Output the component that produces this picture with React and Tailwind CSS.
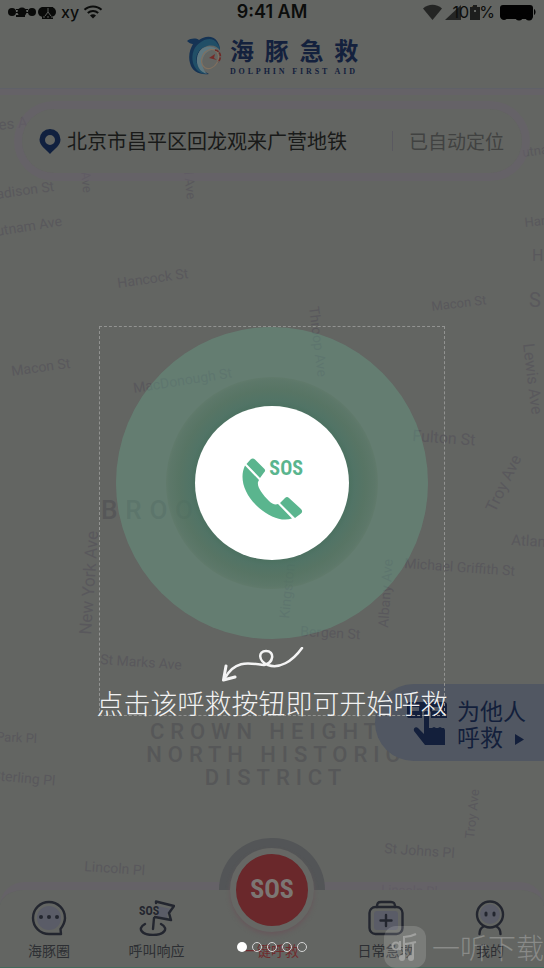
const STREETS = [
  { name: "es A", x: -1, y: 130, r: -6, s: 15 },
  { name: "adison St", x: -3, y: 199, r: -8, s: 14 },
  { name: "utnam Ave", x: -3, y: 236, r: -9, s: 14 },
  { name: "Hancock St", x: 118, y: 288, r: -8, s: 14 },
  { name: "Ave", x: 81, y: 172, r: 84, s: 13 },
  { name: "l Ave", x: 184, y: 172, r: 84, s: 13 },
  { name: "utnam", x: 523, y: 157, r: -8, s: 13 },
  { name: "Han", x: 525, y: 227, r: -6, s: 13 },
  { name: "H", x: 532, y: 261, r: 0, s: 16 },
  { name: "S", x: 529, y: 307, r: 0, s: 20 },
  { name: "Macon St", x: 432, y: 311, r: -7, s: 13 },
  { name: "Macon St", x: 12, y: 376, r: -8, s: 14 },
  { name: "MacDonough St", x: 134, y: 393, r: -9, s: 14 },
  { name: "Throop Ave", x: 309, y: 307, r: 83, s: 14 },
  { name: "Lewis Ave", x: 523, y: 344, r: 83, s: 16 },
  { name: "Fulton St", x: 412, y: 441, r: 4, s: 16 },
  { name: "Troy Ave", x: 495, y: 513, r: -64, s: 16 },
  { name: "Atlantic", x: 511, y: 545, r: 3, s: 15 },
  { name: "Michael Griffith St", x: 404, y: 568, r: 4, s: 14 },
  { name: "Albany Ave", x: 388, y: 628, r: -86, s: 14 },
  { name: "Kingston", x: 289, y: 619, r: -84, s: 14 },
  { name: "Bergen St", x: 300, y: 636, r: 3, s: 14 },
  { name: "New York Ave", x: 91, y: 635, r: -86, s: 17 },
  { name: "St Marks Ave", x: 100, y: 664, r: 4, s: 14 },
  { name: "Park Pl", x: -4, y: 741, r: 3, s: 13 },
  { name: "Sterling Pl", x: -8, y: 780, r: 5, s: 14 },
  { name: "Lincoln Pl", x: 84, y: 871, r: 4, s: 14 },
  { name: "St Johns Pl", x: 384, y: 853, r: 4, s: 14 },
  { name: "Troy Ave", x: 474, y: 839, r: -84, s: 13 },
  { name: "Lincoln Pl", x: 381, y: 894, r: 2, s: 13 },
];

const STEPS = [1, 2, 3, 4, 5];

const CONDENSED =
  "font-['Noto_Sans_ExtraCondensed','Roboto_Condensed','Open_Sans_Condensed','Liberation_Sans_Narrow',sans-serif]";

function MapBackdrop() {
  return (
    <svg
      className="absolute inset-0 h-full w-full font-[Roboto,sans-serif]"
      viewBox="0 0 544 968"
      preserveAspectRatio="xMidYMid slice"
      aria-hidden="true"
    >
      <g fill="#59585c">
        {STREETS.map((st, i) => (
          <text
            key={i}
            fontSize={st.s}
            transform={`translate(${st.x} ${st.y}) rotate(${st.r})`}
          >
            {st.name}
          </text>
        ))}
      </g>
      <g fill="#565758" className="font-medium">
        <text x="101" y="519" fontSize="26" className="tracking-[0.3em]">
          BROO
        </text>
        <g fontSize="22" textAnchor="middle" className="tracking-[0.27em]">
          <text x="276" y="739">CROWN HEIGHTS</text>
          <text x="276" y="762">NORTH HISTORIC</text>
          <text x="276" y="785">DISTRICT</text>
        </g>
      </g>
    </svg>
  );
}

function StatusBar() {
  return (
    <div className="grid h-6 grid-cols-3 items-center px-2 text-[#0c0d0c]">
      <div className="flex items-center gap-1">
        <svg width="49" height="14" viewBox="0 0 49 14">
          <g fill="#090a09">
            <circle cx="4" cy="7" r="4" />
            <circle cx="14" cy="7" r="4.5" />
            <circle cx="24" cy="7" r="4" />
            <circle cx="35" cy="7" r="5" />
            <circle cx="43" cy="7" r="5" />
            <path d="M8 4h12v1H8zM8 7h12v1H8zM8 10h9v2H8zM34 2h11v12H34z" />
          </g>
          <path
            d="M40 3v4l-3 4M40 7l3 4M35 12h2M39 12h2M43 12h2"
            stroke="#5d5f5c"
            strokeWidth="1"
            fill="none"
          />
        </svg>
        <span className="text-base leading-5 font-medium font-[Inter,sans-serif]">xy</span>
        <svg width="20" height="14" viewBox="0 0 20 14" fill="none" stroke="#0c0d0c">
          <path d="M1.5 4.8C6.2.3 13.800.3 18.500 4.800" strokeWidth="2" />
          <path d="M4.800 8C7.800 5.200 12.200 5.200 15.200 8" strokeWidth="2" />
          <path d="M7 10.500c1.800-1.600 4.200-1.600 6 0L10 13.500z" fill="#0c0d0c" stroke="none" />
        </svg>
      </div>
      <span className="text-center text-lg leading-5 font-semibold font-[Inter,sans-serif]">
        9:41 AM
      </span>
      <div className="flex items-center justify-end">
        <svg width="38" height="16" viewBox="0 0 38 16" fill="#242524">
          <path d="M0 4.500C5.500-.5 13.500-.5 19 4.500L9.500 16z" />
          <path d="M38 1v15H22z" />
        </svg>
        <span className="relative -ml-2 text-base leading-5 font-[Inter,sans-serif]">
          100%
          <svg
            className="absolute top-0.5 left-4"
            width="12"
            height="16"
            viewBox="0 0 12 16"
            fill="#1d1e1d"
          >
            <path d="M1 3h3V1h4v2h3v13H1zM5 6v2h2V6z" fillRule="evenodd" />
          </svg>
        </span>
        <svg className="ml-1" width="37" height="17" viewBox="0 0 37 17" fill="#020202">
          <rect x="1" y="1" width="33" height="14" rx="3" />
          <path d="M35 5c2 1 2 5 0 6z" />
          <circle cx="5" cy="13" r="3" />
          <circle cx="20" cy="13" r="3.500" />
          <circle cx="30" cy="13" r="3.500" />
        </svg>
      </div>
    </div>
  );
}

function DolphinLogo() {
  return (
    <svg width="35" height="40" viewBox="0 0 35 40" aria-hidden="true">
      <path
        d="M0 5c4-3 9-3 12-1 5-4 14-5 18 1 2 3 3 6 3 9-3-5-9-7-15-4C11 14 9 22 13 30c2 4 5 6 9 8-9 1-17-2-19-11C1 20 3 13 6 8 4 8 2 7 0 5z"
        fill="#153354"
      />
      <path
        d="M14 6c5-4 13-4 16 1 2 3 3 5 3 7-3-4-9-6-15-3-8 3-11 11-7 19 2 4 5 6 9 8-8 0-12-5-14-11C4 18 7 10 14 6z"
        fill="#214f67"
      />
      <path
        d="M30 13c-8-6-19-1-20 9-1 8 3 14 10 16-4-4-6-11-4-16 2-6 8-9 14-9z"
        fill="#5f7880"
      />
      <ellipse
        cx="23"
        cy="23"
        rx="8"
        ry="10"
        transform="rotate(30 23 23)"
        fill="none"
        stroke="#80705f"
        strokeWidth="1.200"
      />
      <path
        d="M28 14c6 1 7 8 3 12"
        fill="none"
        stroke="#6e2927"
        strokeWidth="1.600"
        strokeDasharray="4 1"
      />
      <path d="M22 22l6-4-1 4 3 2z" fill="#742b29" />
    </svg>
  );
}

function Header() {
  return (
    <header className="flex h-[65px] items-center justify-center gap-2 border-b border-[#5f6168]">
      <DolphinLogo />
      <div className="flex flex-col pt-1 text-[#14213d]">
        <h1 className="-mr-3 text-2xl leading-7 font-bold tracking-[0.45em]">海豚急救</h1>
        <span className="-mr-3 text-[8px] leading-4 font-bold tracking-[0.36em] font-['Liberation_Serif',serif]">
          DOLPHIN FIRST AID
        </span>
      </div>
    </header>
  );
}

function LocationBar() {
  return (
    <div className="mx-3.5 mt-1.5 flex h-20 items-center rounded-full border-8 border-[#67606b]/50 bg-[#636562] bg-clip-padding pr-[18px] pl-4">
      <svg className="shrink-0" width="24" height="27" viewBox="0 0 24 27" aria-hidden="true">
        <path
          d="M12 1a10.500 10.500 0 0 0-10.500 10.500c0 6 5.500 9 10.500 14.500 5-5.500 10.500-8.500 10.500-14.500A10.500 10.500 0 0 0 12 1zm0 6a5 5 0 1 1 0 10 5 5 0 0 1 0-10z"
          fill="#10203f"
          fillRule="evenodd"
        />
      </svg>
      <span className="ml-[5px] truncate text-xl text-[#191a19]">
        北京市昌平区回龙观来广营地铁
      </span>
      <span className="ml-auto shrink-0 border-l border-[#5a5960] pl-4 text-[19px] leading-5 text-[#414241]">
        已自动定位
      </span>
    </div>
  );
}

function CallGuide() {
  return (
    <section className="relative z-10 mx-auto mt-[145px] flex w-[346px] flex-col items-center border border-dashed border-[#929391]">
      <div className="flex size-[312px] items-center justify-center rounded-full bg-[#66a38a]/40">
        <div className="flex size-[212px] items-center justify-center rounded-full bg-[radial-gradient(closest-side,#406b58bb_70%,#486f60aa_78%,#4f6f5c99_88%,#5572617f_97%,#5d77667f_100%)]">
          <button
            type="button"
            aria-label="SOS"
            className="flex size-[154px] items-center justify-center rounded-full bg-white text-[#5ab58e]"
          >
            <span className="relative block h-[62px] w-[62px]">
              <svg width="62" height="68" viewBox="0 -6 62 68" fill="currentColor">
                <path d="M4 7.500C-2 20 3 36 17 49c11 10 24 15 34 11.500L37 46c-3 1-6 0-9-3C21 36 16 29 17 24l1-2z" />
                <path d="M5.500 6l4-4.500c1.500-1.500 3-1.500 4.500 0L23 10.500c1.500 1.500 1.500 2.500 0 4l-4 5.500z" />
                <path d="M39 45l5-5c1.500-1.500 2.500-1.500 4 0l12 11c1.500 1.500 1.500 3 0 4.500L54 60z" />
              </svg>
              <span
                className={`absolute top-1.5 right-0 text-xl leading-5 font-bold ${CONDENSED}`}
              >
                SOS
              </span>
            </span>
          </button>
        </div>
      </div>
      <svg
        className="mt-2"
        width="100"
        height="36"
        viewBox="0 0 100 36"
        fill="none"
        stroke="#f4f4f4"
        strokeLinecap="round"
        strokeLinejoin="round"
        aria-hidden="true"
      >
        <path
          d="M80 1C70 15 57 22 46 18C36 14 36 4 44 4c9 0 8 12-2 14C30 17 14 11 3 31"
          strokeWidth="2.500"
        />
        <path d="M4 19L1.500 33L13 30" strokeWidth="3" />
      </svg>
      <p className="h-8 text-[27px] leading-10 font-light whitespace-nowrap text-[#f2f2f2]">
        点击该呼救按钮即可开始呼救
      </p>
    </section>
  );
}

function HelpOthers() {
  return (
    <button
      type="button"
      className="relative -mt-8 flex h-[77px] items-center gap-2.5 self-end rounded-l-full bg-[#515762] pr-[18px] pl-8 text-left text-[#131f3b]"
    >
      <svg width="40" height="46" viewBox="0 0 40 46" fill="currentColor" aria-hidden="true">
        <path
          d="M3 2h34a3 3 0 0 1 3 3v13H24v-6a5 5 0 0 0-9 0v6H2a2 2 0 0 1-2-2V5a3 3 0 0 1 3-3zm2 5v4h7V7zm20 0v4h9V7z"
          fillRule="evenodd"
        />
        <path d="M17 13c0-3 5-3 5 0v15h3l2-1 2 1h2l2-1 2 1h2l1 2v15H18L7 31c-1-3 2-5 4-3l6 6z" />
      </svg>
      <span className="text-[23px] leading-[26px]">
        为他人
        <br />
        呼救
        <svg className="ml-3 inline" width="9" height="11" viewBox="0 0 9 11" fill="currentColor">
          <path d="M0 0l9 5.500L0 11z" />
        </svg>
      </span>
    </button>
  );
}

const ICON_PROPS = {
  width: 36,
  height: 36,
  viewBox: "0 0 36 36",
  fill: "none",
  stroke: "#23262f",
  strokeWidth: 2.4,
  strokeLinecap: "round",
  strokeLinejoin: "round",
  "aria-hidden": true,
};

function ChatIcon() {
  return (
    <svg {...ICON_PROPS}>
      <circle cx="18" cy="18" r="12" fill="#5a5c67" stroke="none" />
      <path d="M30 34H18A16 16 0 1 1 34 18c0 4-1.500 7-4.500 11z" />
      <g fill="#23262f" stroke="none">
        <circle cx="10" cy="17" r="2" />
        <circle cx="18" cy="17" r="2" />
        <circle cx="26" cy="17" r="2" />
      </g>
    </svg>
  );
}

function FlagIcon() {
  return (
    <svg {...ICON_PROPS}>
      <path d="M19 6l13 3-4 6 1 4-11-2z" fill="#5a5c67" stroke="none" />
      <path d="M17 3V1.500L35 6l-5 7 2 7-16-3M15 18l-1 11" />
      <path d="M6 24c-9 5-2 11 8 11s17-6 8-11" />
      <text
        x="0"
        y="15"
        fontSize="12"
        fill="#23262f"
        stroke="none"
        className={`font-bold ${CONDENSED}`}
      >
        SOS
      </text>
    </svg>
  );
}

function KitIcon() {
  return (
    <svg {...ICON_PROPS}>
      <rect x="6" y="11" width="24" height="19" rx="3" fill="#5a5c67" stroke="none" />
      <rect x="1.500" y="7" width="33" height="27" rx="6" />
      <path d="M9 7c0-4 1-5 4-5h10c3 0 4 1 4 5M18 15v11M12.500 20.500h11" />
    </svg>
  );
}

function ProfileIcon() {
  return (
    <svg {...ICON_PROPS}>
      <circle cx="18" cy="14" r="10" fill="#5a5c67" stroke="none" />
      <circle cx="18" cy="14.500" r="13" />
      <path d="M14 13v2M22 13v2" strokeWidth="3" />
      <path d="M7.500 34c0-4 1-6 4-7.500M28.500 34c0-4-1-6-4-7.500" />
    </svg>
  );
}

function NavItem({ label, children }) {
  return (
    <a href="#" className="flex flex-col items-center gap-1 whitespace-nowrap">
      {children}
      <span>{label}</span>
    </a>
  );
}

function BottomNav() {
  return (
    <nav className="relative mt-auto flex h-[86px] items-start justify-between rounded-t-3xl border-t-8 border-[#67606b]/50 bg-[#636562] bg-clip-padding pt-2.5 pr-9 pl-7 text-sm text-[#2d2f33] shadow-[inset_0_-1px_0_#3f6a5b]">
      <NavItem label="海豚圈">
        <ChatIcon />
      </NavItem>
      <NavItem label="呼叫响应">
        <FlagIcon />
      </NavItem>
      <a href="#" className="flex flex-col items-center gap-1 whitespace-nowrap text-[#702b2d]">
        <span className="h-9" />
        <span>一键呼救</span>
      </a>
      <NavItem label="日常急救">
        <KitIcon />
      </NavItem>
      <NavItem label="我的">
        <ProfileIcon />
      </NavItem>
      <div className="absolute -top-[52px] left-1/2 h-[52px] w-[106px] -translate-x-1/2 rounded-t-full bg-[#535557]" />
      <button
        type="button"
        className={`absolute -top-[42px] left-1/2 flex size-[84px] -translate-x-1/2 items-center justify-center rounded-full border-[6px] border-[#666764] bg-[#6a282b] text-[26px] font-bold text-[#7c7673] shadow-[0_3px_4px_#67595c] ${CONDENSED}`}
      >
        SOS
      </button>
      <div className="absolute bottom-4 left-1/2 flex -translate-x-1/2 gap-[5px]">
        {STEPS.map((n) => (
          <span
            key={n}
            className={
              n === 1
                ? "size-2.5 rounded-full bg-white"
                : "size-2.5 rounded-full border border-[#d5d5d5]"
            }
          />
        ))}
      </div>
      <Watermark />
    </nav>
  );
}

function Watermark() {
  return (
    <div className="pointer-events-none absolute right-0 bottom-0 flex items-center gap-1.5 text-[28px] leading-10 font-light whitespace-nowrap text-white/25">
      <span className="flex size-[42px] items-center justify-center rounded-xl bg-white/15">
        <svg
          width="28"
          height="30"
          viewBox="0 0 28 30"
          fill="none"
          stroke="#a0a19f"
          strokeWidth="2"
          aria-hidden="true"
        >
          <circle cx="5" cy="14" r="3.500" />
          <path d="M9 9v9M13 26V5c4 0 8-1 12-3M13 12c4 0 8-1 12-2M22 11v15" />
          <circle cx="11" cy="26" r="2" fill="#a0a19f" />
          <circle cx="20" cy="26" r="2" fill="#a0a19f" />
        </svg>
      </span>
      一听下载
    </div>
  );
}

export default function App() {
  return (
    <div className="relative flex min-h-screen flex-col overflow-hidden bg-[#636562] font-['Noto_Sans_CJK_SC',sans-serif]">
      <MapBackdrop />
      <div className="relative border-b-[6px] border-[#656267] bg-[#636562]">
        <StatusBar />
        <Header />
      </div>
      <main className="relative flex flex-1 flex-col">
        <LocationBar />
        <CallGuide />
        <HelpOthers />
      </main>
      <BottomNav />
    </div>
  );
}
